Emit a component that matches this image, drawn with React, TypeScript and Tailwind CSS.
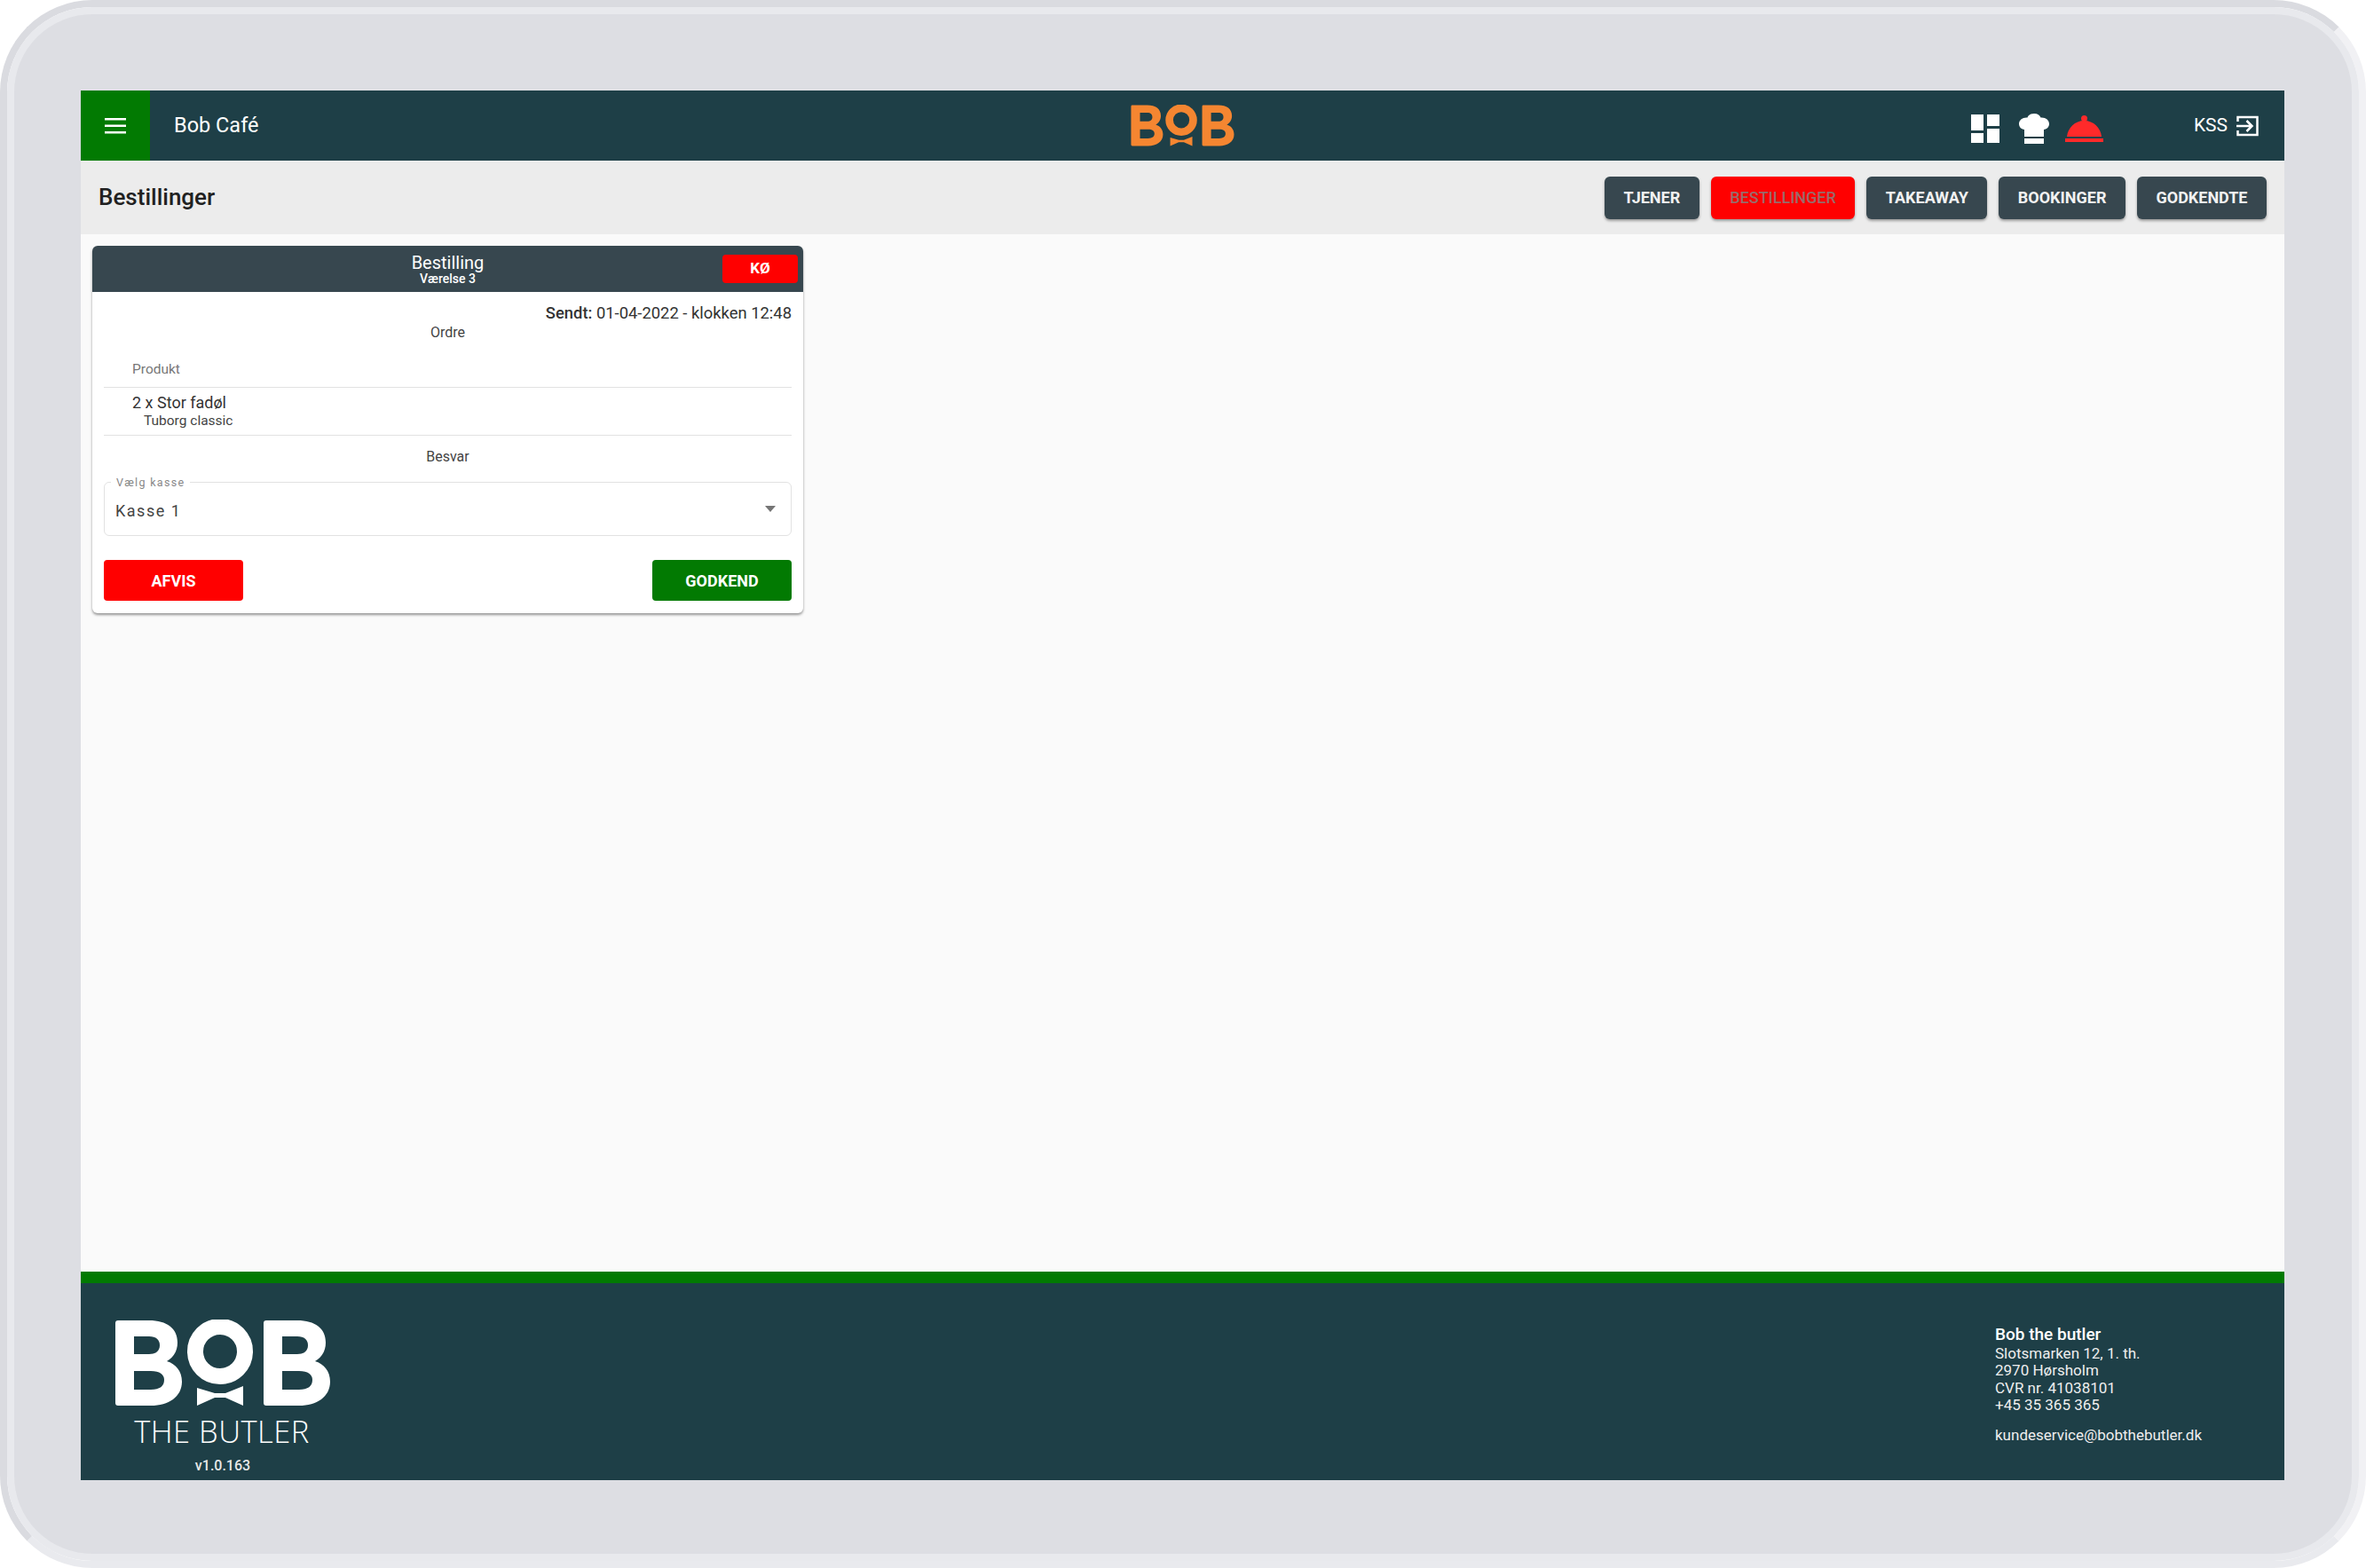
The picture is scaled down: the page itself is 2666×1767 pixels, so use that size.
import * as React from "react";

const font = { fontFamily: "Roboto, Arial, sans-serif" };

const B_PATH =
  "M3 1H38C58 1 70 10 70 26C70 36 65 43 58 47C68 50 75 58 75 70C75 87 60 97 40 97H3A3 3 0 0 1 0 94V4A3 3 0 0 1 3 1ZM21 19V39H38C46 39 50 35 50 29C50 23 46 19 38 19ZM21 58V79H40C50 79 55 75 55 68C55 62 50 58 40 58Z";

const BobLogo = ({ className, color }: { className: string; color: string }) => (
  <svg viewBox="0 0 242 98" className={className} fill={color}>
    <path d={B_PATH} fillRule="evenodd" />
    <circle cx="118" cy="36" r="28" fill="none" stroke={color} strokeWidth="18" />
    <path d="M92 77L112 83H124L144 75V97L124 88H112L92 97Z" />
    <path d={B_PATH} fillRule="evenodd" transform="translate(167 0)" />
  </svg>
);

const DashboardIcon = () => (
  <svg viewBox="0 0 32 32" className="h-8 w-8" fill="#fff">
    <rect x="0" y="0" width="14" height="18" />
    <rect x="0" y="21" width="14" height="11" />
    <rect x="18" y="0" width="14" height="13" />
    <rect x="18" y="16" width="14" height="16" />
  </svg>
);

const ChefIcon = () => (
  <svg viewBox="0 0 34 34" className="h-[34px] w-[34px]" fill="#fff">
    <path d="M17 0C13 0 10.500 2 9.500 4.500C4 4 0 7.500 0 11.500C0 15 2.500 17.500 6 18V26H28V18C31.500 17.500 34 15 34 11.500C34 7.500 30 4 24.500 4.500C23.500 2 21 0 17 0Z" />
    <rect x="6" y="28" width="22" height="6" />
  </svg>
);

const ClocheIcon = () => (
  <svg viewBox="0 0 43 30" className="h-[30px] w-[43px]" fill="#ff2a2a">
    <circle cx="21.500" cy="3.500" r="3.500" />
    <path d="M2 24C3 14 11 6 21.500 6C32 6 40 14 41 24Z" />
    <rect x="0" y="26" width="43" height="4" />
  </svg>
);

const ExitIcon = () => (
  <svg viewBox="0 0 25 24" className="h-6 w-[25px]" fill="none" stroke="#fff" strokeWidth="2.500">
    <path d="M1.500 7V2H23.500V22H1.500V17" />
    <path d="M0 12H17M11.500 6L17.500 12L11.500 18" />
  </svg>
);

const navButtons = ["TJENER", "BESTILLINGER", "TAKEAWAY", "BOOKINGER", "GODKENDTE"];

const App = () => {
  return (
    <div className="h-[1767px] w-[2666px] bg-white" style={font}>
      <div className="h-full rounded-[104px] border-[8px] border-t-[#dadbe0] border-r-[#f1f1f4] border-b-[#e9eaee] border-l-[#dadbe0]">
        <div className="flex h-full flex-col rounded-[96px] border-[8px] border-[#e8e9ed] bg-[#dddee3] pt-[86px] pr-[76px] pb-[83px] pl-[75px]">
          <header className="grid h-[79px] shrink-0 grid-cols-[1fr_auto_1fr] items-center bg-[#1e3f47]">
            <div className="flex h-full items-center">
              <div className="flex h-full w-[78px] items-center justify-center bg-[#027a02]">
                <svg viewBox="0 0 24 18" className="h-[18px] w-6" fill="#fff">
                  <rect y="0" width="24" height="2.500" />
                  <rect y="7.500" width="24" height="2.500" />
                  <rect y="15" width="24" height="2.500" />
                </svg>
              </div>
              <span className="ml-[27px] pt-[1px] text-[23.500px] text-white">Bob Café</span>
            </div>
            <BobLogo className="h-[47px] w-[117px]" color="#f58631" />
            <div className="flex items-center justify-end pr-[29px]">
              <div className="flex items-center pt-[6px]">
                <DashboardIcon />
                <span className="ml-[22px]">
                  <ChefIcon />
                </span>
                <span className="ml-[18px]">
                  <ClocheIcon />
                </span>
              </div>
              <span className="ml-[102px] text-[21px] text-white">KSS</span>
              <span className="ml-[10px]">
                <ExitIcon />
              </span>
            </div>
          </header>

          <div className="flex h-[83px] shrink-0 items-center justify-between bg-[#ececec] pr-5 pl-5">
            <h1 className="text-[26px] font-medium text-[#212121]">Bestillinger</h1>
            <div className="flex gap-[13px]">
              {navButtons.map((label) =>
                label === "BESTILLINGER" ? (
                  <button
                    key={label}
                    className="h-12 rounded-md bg-[#ff0000] px-[21.500px] text-[18px] font-medium text-[#9a6a6a] shadow-[0_2px_3px_rgba(0,0,0,0.35)]"
                  >
                    {label}
                  </button>
                ) : (
                  <button
                    key={label}
                    className="h-12 rounded-md bg-[#37474f] px-[21.500px] text-[18px] font-bold text-[#f2f2f2] shadow-[0_2px_3px_rgba(0,0,0,0.35)]"
                  >
                    {label}
                  </button>
                ),
              )}
            </div>
          </div>

          <main className="min-h-0 flex-1 bg-[#fafafa] pt-[13px] pl-[13px]">
            <div className="w-[801px] rounded-md bg-white shadow-[0_2px_3px_rgba(0,0,0,0.4)]">
              <div className="relative flex h-[52px] flex-col items-center justify-center rounded-t-md bg-[#37474f] text-white">
                <span className="text-[20px] leading-[22px]">Bestilling</span>
                <span className="text-[14px] leading-[15px] font-medium">Værelse 3</span>
                <span className="absolute top-[10px] right-[6px] flex h-8 w-[85px] items-center justify-center rounded-[4px] bg-[#ff0000] text-[17px] font-bold">
                  KØ
                </span>
              </div>
              <div className="px-[13px] pt-[12px] pb-[14px] text-[#333]">
                <p className="text-right text-[18.400px] leading-[24px]">
                  <span className="font-medium">Sendt:</span> 01-04-2022 - klokken 12:48
                </p>
                <p className="text-center text-[16px] leading-[20px] text-[#444]">Ordre</p>
                <div className="flex h-[52px] items-end border-b border-[#e2e2e2] pb-[8px] pl-[32px] text-[15.500px] text-[#777]">
                  Produkt
                </div>
                <div className="flex h-[54px] flex-col justify-center border-b border-[#e2e2e2] pb-[2px] pl-[32px]">
                  <span className="text-[18px] leading-[22px]">2 x Stor fadøl</span>
                  <span className="pl-[13px] text-[15.500px] leading-[18px] text-[#444]">Tuborg classic</span>
                </div>
                <p className="pt-[14px] text-center text-[16px] leading-[20px] text-[#444]">Besvar</p>
                <div className="relative mt-[18px] flex h-[61px] items-center justify-between rounded-md border border-[#e2e2e2] pr-[17px] pl-[12px]">
                  <span className="absolute -top-[8px] left-[7px] bg-white px-[6px] text-[12.500px] leading-[16px] tracking-[1.300px] text-[#888]">
                    Vælg kasse
                  </span>
                  <span className="pt-[4px] text-[18px] tracking-[1.500px] text-[#444]">Kasse 1</span>
                  <span className="h-0 w-0 border-x-[6px] border-t-[7px] border-x-transparent border-t-[#757575]" />
                </div>
                <div className="mt-[27px] flex justify-between">
                  <button className="h-[46px] w-[157px] rounded-[4px] bg-[#ff0000] text-[18px] font-bold text-white">
                    AFVIS
                  </button>
                  <button className="h-[46px] w-[157px] rounded-[4px] bg-[#027a02] text-[18px] font-bold text-white">
                    GODKEND
                  </button>
                </div>
              </div>
            </div>
          </main>

          <footer className="flex h-[235px] shrink-0 justify-between border-t-[13px] border-[#027a02] bg-[#1e3f47] pr-[93px] pl-[39px] text-white">
            <div className="flex flex-col items-center pt-[41px]">
              <BobLogo className="h-[98px] w-[242px]" color="#fff" />
              <span
                className="mt-[11px] pr-[2px] text-[34.500px] leading-[34px] font-light tracking-[0.500px]"
                style={{ fontFamily: "'Open Sans', sans-serif" }}
              >
                THE BUTLER
              </span>
              <span className="mt-[13px] text-[16px] leading-[18px] font-medium text-[#e8e8e8]">v1.0.163</span>
            </div>
            <div className="w-[233px] pt-[48px] text-[17px] leading-[19.500px] text-[#eeeeee]">
              <p className="mb-[2px] text-[19px] font-medium text-white">Bob the butler</p>
              <p>Slotsmarken 12, 1. th.</p>
              <p>2970 Hørsholm</p>
              <p>CVR nr. 41038101</p>
              <p>+45 35 365 365</p>
              <p className="mt-[14px]">kundeservice@bobthebutler.dk</p>
            </div>
          </footer>
        </div>
      </div>
    </div>
  );
};

export default App;
